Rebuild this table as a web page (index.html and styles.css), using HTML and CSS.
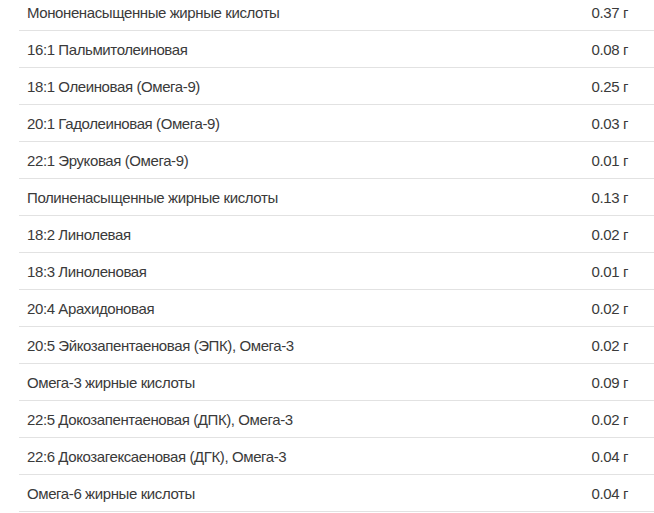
FILE: index.html
```html
<!DOCTYPE html>
<html lang="ru">
<head>
<meta charset="utf-8">
<link rel="stylesheet" href="styles.css">
</head>
<body>
<div class="table">
  <div class="row"><span class="name">Мононенасыщенные жирные кислоты</span><span class="val">0.37 г</span></div>
  <div class="row"><span class="name">16:1 Пальмитолеиновая</span><span class="val">0.08 г</span></div>
  <div class="row"><span class="name">18:1 Олеиновая (Омега-9)</span><span class="val">0.25 г</span></div>
  <div class="row"><span class="name">20:1 Гадолеиновая (Омега-9)</span><span class="val">0.03 г</span></div>
  <div class="row"><span class="name">22:1 Эруковая (Омега-9)</span><span class="val">0.01 г</span></div>
  <div class="row"><span class="name">Полиненасыщенные жирные кислоты</span><span class="val">0.13 г</span></div>
  <div class="row"><span class="name">18:2 Линолевая</span><span class="val">0.02 г</span></div>
  <div class="row"><span class="name">18:3 Линоленовая</span><span class="val">0.01 г</span></div>
  <div class="row"><span class="name">20:4 Арахидоновая</span><span class="val">0.02 г</span></div>
  <div class="row"><span class="name">20:5 Эйкозапентаеновая (ЭПК), Омега-3</span><span class="val">0.02 г</span></div>
  <div class="row"><span class="name">Омега-3 жирные кислоты</span><span class="val">0.09 г</span></div>
  <div class="row"><span class="name">22:5 Докозапентаеновая (ДПК), Омега-3</span><span class="val">0.02 г</span></div>
  <div class="row"><span class="name">22:6 Докозагексаеновая (ДГК), Омега-3</span><span class="val">0.04 г</span></div>
  <div class="row"><span class="name">Омега-6 жирные кислоты</span><span class="val">0.04 г</span></div>
</div>
</body>
</html>
```
FILE: styles.css
```css
html, body {
  margin: 0;
  padding: 0;
  background: #fff;
  overflow: hidden;
}
.table {
  margin: -6px 0 0 19px;
  font-family: "Liberation Sans", Arial, sans-serif;
  font-size: 15px;
  letter-spacing: -0.4px;
  color: #3a3a3a;
}
.row {
  display: flex;
  justify-content: space-between;
  align-items: center;
  height: 36px;
  border-bottom: 1px solid #e2e2e2;
  padding: 0 26px 0 8px;
}
```
